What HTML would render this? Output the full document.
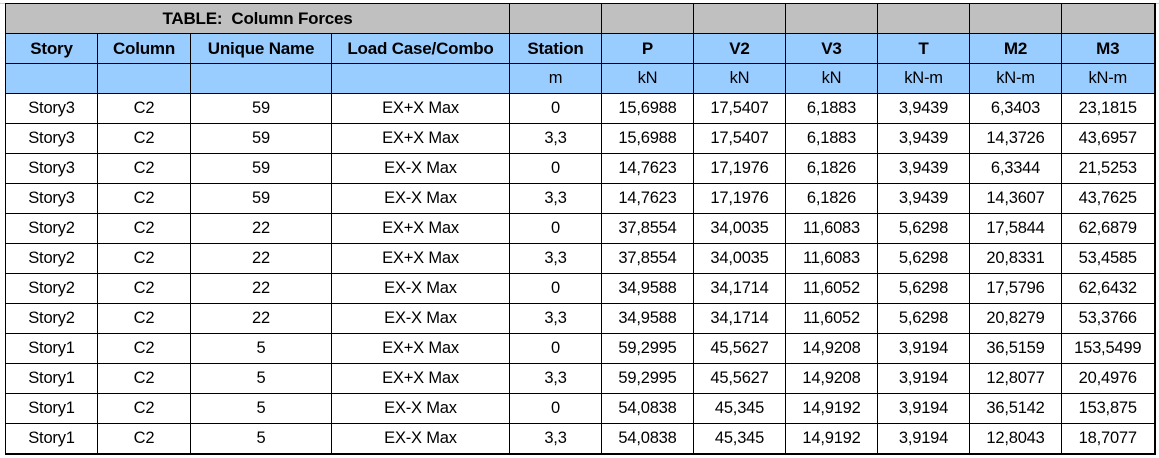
<!DOCTYPE html>
<html><head><style>
body{margin:0;background:#fff;width:1159px;height:458px;overflow:hidden;position:relative;font-family:"Liberation Sans",Arial,sans-serif;}
table{position:absolute;left:5px;top:3px;border-collapse:collapse;table-layout:fixed;}
td{border:1px solid #000;height:29px;line-height:29px;padding:0;text-align:center;vertical-align:middle;font-size:16.5px;color:#000;white-space:nowrap;overflow:hidden;letter-spacing:-0.2px;}
tr.t td{background:#c0c0c0;font-weight:bold;font-size:17px;}
tr.h td{background:#99ccff;font-weight:bold;font-size:17px;}
tr.u td{background:#99ccff;}
</style></head><body>
<div style="position:absolute;left:0;top:0;width:1159px;height:3px;border-bottom:1px solid #d0d0d0"></div>
<table style="border-right:2px solid #000;border-bottom:2px solid #000;border-left:1px solid #000">
<colgroup><col style="width:92px"><col style="width:93px"><col style="width:141px"><col style="width:178px"><col style="width:92px"><col style="width:92px"><col style="width:92px"><col style="width:92px"><col style="width:92px"><col style="width:92px"><col style="width:93px"></colgroup>
<tr class="t"><td colspan="4">TABLE:&nbsp; Column Forces</td><td></td><td></td><td></td><td></td><td></td><td></td><td></td></tr>
<tr class="h"><td>Story</td><td>Column</td><td>Unique Name</td><td>Load Case/Combo</td><td>Station</td><td>P</td><td>V2</td><td>V3</td><td>T</td><td>M2</td><td>M3</td></tr>
<tr class="u"><td></td><td></td><td></td><td></td><td>m</td><td>kN</td><td>kN</td><td>kN</td><td>kN-m</td><td>kN-m</td><td>kN-m</td></tr>
<tr><td>Story3</td><td>C2</td><td>59</td><td>EX+X Max</td><td>0</td><td>15,6988</td><td>17,5407</td><td>6,1883</td><td>3,9439</td><td>6,3403</td><td>23,1815</td></tr>
<tr><td>Story3</td><td>C2</td><td>59</td><td>EX+X Max</td><td>3,3</td><td>15,6988</td><td>17,5407</td><td>6,1883</td><td>3,9439</td><td>14,3726</td><td>43,6957</td></tr>
<tr><td>Story3</td><td>C2</td><td>59</td><td>EX-X Max</td><td>0</td><td>14,7623</td><td>17,1976</td><td>6,1826</td><td>3,9439</td><td>6,3344</td><td>21,5253</td></tr>
<tr><td>Story3</td><td>C2</td><td>59</td><td>EX-X Max</td><td>3,3</td><td>14,7623</td><td>17,1976</td><td>6,1826</td><td>3,9439</td><td>14,3607</td><td>43,7625</td></tr>
<tr><td>Story2</td><td>C2</td><td>22</td><td>EX+X Max</td><td>0</td><td>37,8554</td><td>34,0035</td><td>11,6083</td><td>5,6298</td><td>17,5844</td><td>62,6879</td></tr>
<tr><td>Story2</td><td>C2</td><td>22</td><td>EX+X Max</td><td>3,3</td><td>37,8554</td><td>34,0035</td><td>11,6083</td><td>5,6298</td><td>20,8331</td><td>53,4585</td></tr>
<tr><td>Story2</td><td>C2</td><td>22</td><td>EX-X Max</td><td>0</td><td>34,9588</td><td>34,1714</td><td>11,6052</td><td>5,6298</td><td>17,5796</td><td>62,6432</td></tr>
<tr><td>Story2</td><td>C2</td><td>22</td><td>EX-X Max</td><td>3,3</td><td>34,9588</td><td>34,1714</td><td>11,6052</td><td>5,6298</td><td>20,8279</td><td>53,3766</td></tr>
<tr><td>Story1</td><td>C2</td><td>5</td><td>EX+X Max</td><td>0</td><td>59,2995</td><td>45,5627</td><td>14,9208</td><td>3,9194</td><td>36,5159</td><td>153,5499</td></tr>
<tr><td>Story1</td><td>C2</td><td>5</td><td>EX+X Max</td><td>3,3</td><td>59,2995</td><td>45,5627</td><td>14,9208</td><td>3,9194</td><td>12,8077</td><td>20,4976</td></tr>
<tr><td>Story1</td><td>C2</td><td>5</td><td>EX-X Max</td><td>0</td><td>54,0838</td><td>45,345</td><td>14,9192</td><td>3,9194</td><td>36,5142</td><td>153,875</td></tr>
<tr><td>Story1</td><td>C2</td><td>5</td><td>EX-X Max</td><td>3,3</td><td>54,0838</td><td>45,345</td><td>14,9192</td><td>3,9194</td><td>12,8043</td><td>18,7077</td></tr>
</table>
</body></html>
